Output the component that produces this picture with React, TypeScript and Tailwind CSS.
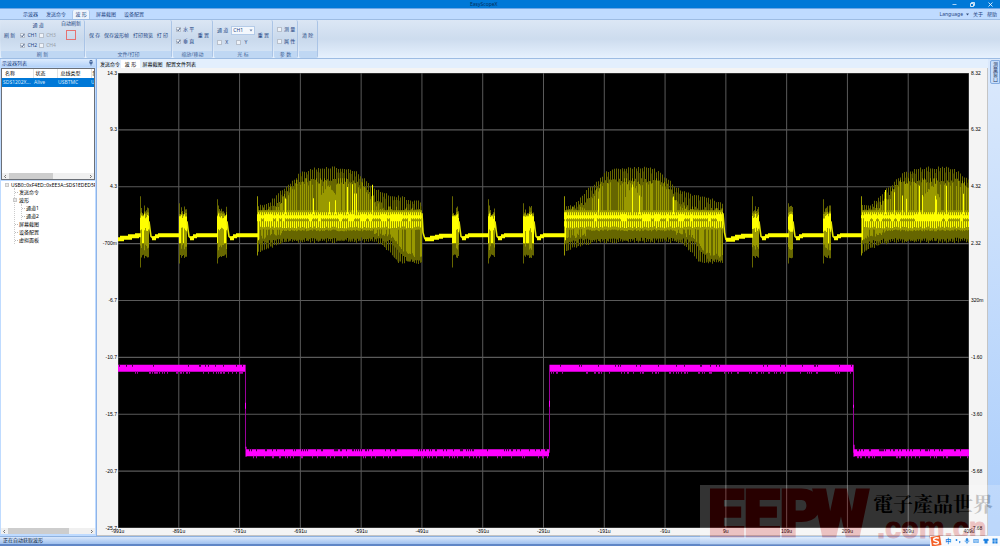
import type { ReactNode } from "react";

const CJK = "font-['Noto_Sans','Noto_Sans_CJK_SC',sans-serif]";

/* ---------- waveform geometry ---------- */

const LEFT = 118;
const TOP = 73;
const WIDTH = 851;
const HEIGHT = 454;

const noise = (n: number) => {
  const v = Math.sin(n * 12.9898 + 4.1) * 43758.5453;
  return v - Math.floor(v);
};

const lerp = (points: number[][], x: number) => {
  for (let i = 1; i < points.length; i++) {
    const [x1, y1] = points[i];
    if (x <= x1) {
      const [x0, y0] = points[i - 1];
      return y0 + ((y1 - y0) * (x - x0)) / (x1 - x0);
    }
  }
  return points[points.length - 1][1];
};

const upper = [[0, 204], [10, 203], [16, 197], [23, 189], [33, 181], [43, 171], [53, 168], [62, 166], [88, 166], [100, 171], [108, 178], [116, 186], [128, 192], [142, 195], [165, 201]];
const innerUpper = [[0, 208], [12, 206], [22, 200], [30, 190], [38, 180], [44, 178], [98, 178], [108, 184], [118, 198], [130, 206], [165, 208]];
const lower = [[0, 254], [8, 250], [20, 246], [32, 243], [118, 243], [126, 247], [134, 256], [140, 263], [165, 264]];
const innerLower = [[0, 242], [20, 238], [118, 237], [134, 240], [142, 250], [150, 258], [165, 260]];

const layers = { dark: "", dim: "", mid: "", bright: "" };
type Layer = keyof typeof layers;
const bar = (layer: Layer, x: number, y0: number, y1: number) => {
  layers[layer] += `M${x} ${y0.toFixed(1)}V${y1.toFixed(1)}`;
};

const longBursts = [[257, 422], [564, 723], [861, 1024]];
longBursts.forEach(([start, end]) => {
  for (let x = start; x < Math.min(end, 969); x++) {
    const t = ((x - start) * 165) / (end - start);
    const px = x + 0.5;
    const top = lerp(upper, t);
    const bottom = lerp(lower, t);
    const innerTop = lerp(innerUpper, t);
    const innerBottom = lerp(innerLower, t);
    const r = noise(x);
    const even = x % 2 === 0;
    const centre = t > 24 && t < 116;

    if (even) bar("dim", px, top + r * 3, bottom - r * 3);
    else if (r > 0.6) bar("dark", px, top + 2 + r * 5, bottom - 2);

    bar(r > 0.8 ? "mid" : "dim", px, innerTop + (even ? 0 : r * 6), 212);
    if (even && r > 0.25) bar("mid", px, innerTop + r * 10, 212);
    if (centre && noise(x + 77) > 0.9) bar("bright", px, 184 + noise(x + 9) * 18, 214);
    if (t > 62 && t < 80) bar("mid", px, 184 + Math.abs(t - 71) * 1.4 + r * 3, 214);

    bar("dim", px, 226, innerBottom + r * 3);
    if (!centre && r > 0.3) bar("mid", px, 226, innerBottom - r * 6);
    bar("mid", px, 210, 229 + r * 2);
    bar("bright", px, even ? 212 : 215, even ? 219 : 218);
    if (even) bar("bright", px, 221, 226 + r * 2);
    if (noise(Math.floor(x / 3) + 31) > 0.62) bar("bright", px, 214, 221);
  }
  bar("mid", start + 0.5, 196, 255);
  bar("bright", start + 1.5, 212, 240);
});

const shortBursts = [[140, 149], [179, 187], [217, 227], [452, 459], [488, 495], [523, 534], [752, 759], [788, 793], [823, 831]];
shortBursts.forEach(([start, end], i) => {
  bar("dim", start + 0.5, i % 3 === 0 ? 196 : 199 + (i % 2) * 4, i % 3 === 0 ? 267 : 263);
  for (let x = start; x < end; x++) {
    const r = noise(x * 3);
    const px = x + 0.5;
    bar("dim", px, 205 + r * 10, 258 - r * 4);
    bar("mid", px, 211 + r * 4, 250 - r * 9);
    bar("bright", px, 213 + r * 8, 227 + noise(x + 5) * 5);
    if (r > 0.7) bar("bright", px, 216, 243);
  }
});

const recovery = shortBursts
  .map(([, end]) => `M${end} 221L${end + 1} 229L${end + 2} 236L${end + 4} 238L${end + 6} 236`)
  .join("");
const settle = shortBursts
  .map(([, end], i) => {
    const next = i % 3 === 2 ? longBursts[(i - 2) / 3][0] : shortBursts[i + 1][0];
    return `M${end + 3} 238H${end + 7}M${end + 6} 236H${end + 10}M${end + 9} 235H${next + 1}`;
  })
  .join("");
const baseline = "M118 239H122V237.500H130V236H137V235H141M425 239H432V237.500H437V236.500H441V235.500H453M726 239.500H733V238H737V236.500H743V235.500H753";
const falls = "M422 213L423 232L425 239M723 213L724.500 232L726 239.500";

const channel2 = [[118, 245, 367.5], [246, 549, 452], [550, 853, 367.5], [854, 969, 452]];
let ch2Ticks = "";
let ch2Gaps = "";
channel2.forEach(([from, to, y]) => {
  for (let x = from; x < to; x++) {
    if (noise(x * 5) > 0.8) ch2Ticks += `M${x + 0.5} ${y + 3}V${y + 5.5}`;
    if (noise(x * 7) > (y > 400 ? 0.75 : 0.9)) ch2Gaps += `M${x + 0.5} ${y - 4}V${y - 1.5}`;
  }
});

const range = (n: number) => Array.from({ length: n }, (_, i) => i);

function Waveform() {
  return (
    <svg className="h-full w-full bg-black" viewBox={`${LEFT} ${TOP} ${WIDTH} ${HEIGHT}`} preserveAspectRatio="none" role="img" aria-label="Waveform">
      <g stroke="#5a5a5a" strokeWidth="1">
        {range(15).map((i) => {
          const x = LEFT + (i * WIDTH) / 14;
          return <path key={i} d={`M${x} ${TOP}V${TOP + HEIGHT}`} />;
        })}
        {range(9).map((i) => {
          const y = TOP + (i * HEIGHT) / 8;
          return <path key={i} d={`M${LEFT} ${y}H${LEFT + WIDTH}`} />;
        })}
      </g>
      <g fill="none" strokeWidth="1">
        <path d={layers.dark} stroke="#333300" />
        <path d={layers.dim} stroke="#666600" />
        <path d={layers.mid} stroke="#999900" />
        <path d={layers.bright} stroke="#ffff00" />
        <path d={recovery} stroke="#e6e600" strokeWidth="1.600" />
        <path d={falls} stroke="#e6e600" strokeWidth="1.600" />
        <path d={settle} stroke="#ffff00" strokeWidth="4" />
        <path d={baseline} stroke="#ffff00" strokeWidth="4" />
      </g>
      <g fill="none" stroke="#ff00ff">
        <path d="M245.500 364V448M549.500 364V452M853.500 364V452" stroke="#990099" strokeWidth="1" />
        <path d="M245.500 402V408M246 446V456M549.500 400V406M853.500 404V407M854 444V456" strokeWidth="1" />
        {channel2.map(([from, to, y]) => (
          <path key={from} d={`M${from} ${y}H${to}`} strokeWidth="7" />
        ))}
        <path d={ch2Ticks} stroke="#b300b3" strokeWidth="1" />
        <path d={ch2Gaps} stroke="#400040" strokeWidth="1" />
      </g>
    </svg>
  );
}

/* ---------- ribbon ---------- */

function Check({ label, checked, muted }: { label: string; checked?: boolean; muted?: boolean }) {
  return (
    <label className={`flex items-center gap-0.5 whitespace-pre ${muted ? "text-[#9a9fa8]" : ""}`}>
      <span className="relative block size-[5px]">
        <input type="checkbox" defaultChecked={checked} className="peer block size-[5px] appearance-none border border-[#b8c0cc] bg-[#eef2f8]" />
        <svg viewBox="0 0 5 5" className="pointer-events-none absolute inset-0 hidden size-[5px] peer-checked:block">
          <path d="M1 2.500L2.200 3.800L4.200 1" fill="none" stroke="#35507c" strokeWidth="0.900" />
        </svg>
      </span>
      {label}
    </label>
  );
}

function Group({ title, width, children }: { title: string; width: string; children: ReactNode }) {
  return (
    <section className={`flex flex-col overflow-hidden rounded-[2px] border-r border-[#aac4e6] bg-linear-to-b from-[#dbe6f4] via-[#c9d9ec] to-[#d9e8f9] ${width}`}>
      <div className="flex flex-1 items-center justify-between px-[3px]">{children}</div>
      <h2 className="h-[7px] bg-[#bfd7f3] text-center leading-[7px] text-[#3f6497]">{title}</h2>
    </section>
  );
}

function Cmd({ children }: { children: ReactNode }) {
  return <button className="whitespace-pre">{children}</button>;
}

function Ribbon() {
  return (
    <div className="flex h-[40px] gap-px border-y border-[#9dbce3] bg-linear-to-b from-[#dce7f5] via-[#cddcee] to-[#e6f1fe] px-px text-[5px] leading-[7px] text-[#1f4684]">
      <Group title="刷 新" width="w-[84px]">
        <Cmd>刷 新</Cmd>
        <div className="grid grid-cols-2 gap-x-0.5 gap-y-[3px]">
          <span className="col-span-2 text-center">通 道</span>
          <Check label="CH1" checked />
          <Check label="CH3" muted />
          <Check label="CH2" checked />
          <Check label="CH4" muted />
        </div>
        <div className="flex flex-col items-center gap-[3px] self-start">
          <span>自动刷新</span>
          <button aria-label="自动刷新" className="size-[10px] border border-[#e57373]" />
        </div>
      </Group>
      <Group title="文件/打印" width="w-[86px]">
        <Cmd>保 存</Cmd>
        <Cmd>保存波形帧</Cmd>
        <Cmd>打印预览</Cmd>
        <Cmd>打 印</Cmd>
      </Group>
      <Group title="缩放/移动" width="w-[40px]">
        <div className="flex flex-col gap-[5px]">
          <Check label="水 平" checked />
          <Check label="垂 直" checked />
        </div>
        <Cmd>重 置</Cmd>
      </Group>
      <Group title="光 标" width="w-[59px]">
        <div className="flex flex-col gap-1">
          <div className="flex items-center gap-[3px]">
            <label htmlFor="cursor-channel">通 道</label>
            <span className="relative block">
              <select id="cursor-channel" className="block h-[9px] w-[24px] appearance-none border border-[#b4cbe8] bg-[#f4f8fd] pl-px text-[5px] leading-[7px]">
                <option>CH1</option>
              </select>
              <svg viewBox="0 0 4 3" className="pointer-events-none absolute top-[3px] right-[2px] h-[3px] w-1">
                <path d="M0.500 0.500H3.500L2 2.500Z" fill="#6c84ab" />
              </svg>
            </span>
          </div>
          <div className="flex gap-2">
            <Check label=" X" />
            <Check label=" Y" />
          </div>
        </div>
        <Cmd>重 置</Cmd>
      </Group>
      <Group title="参 数" width="w-[24px]">
        <div className="flex flex-col gap-[5px]">
          <Check label="测 量" />
          <Check label="属 性" />
        </div>
      </Group>
      <Group title="" width="w-[19px]">
        <Cmd>清 除</Cmd>
      </Group>
    </div>
  );
}

function Header() {
  return (
    <header>
      <div className="flex h-[8px] items-center bg-[#0078d7] text-[5px] leading-[8px]">
        <div className="w-[470px] max-w-[47%]" />
        <h1 className="text-[#04305c]">EasyScopeX</h1>
        <div className="flex flex-1 items-center justify-end gap-[13px] pr-[7px]">
          <button aria-label="Minimize" className="block">
            <svg viewBox="0 0 5 5" className="size-[5px]"><path d="M0.500 2.500H4.500" stroke="#d5e8fa" strokeWidth="0.800" /></svg>
          </button>
          <button aria-label="Restore" className="block">
            <svg viewBox="0 0 5 5" className="size-[5px]" fill="none" stroke="#fff" strokeWidth="0.800"><path d="M0.500 1.500H3.500V4.500H0.500ZM1.500 1.500V0.500H4.500V3.500H3.500" /></svg>
          </button>
          <button aria-label="Close" className="block">
            <svg viewBox="0 0 5 5" className="size-[5px]"><path d="M0.500 0.500L4.500 4.500M4.500 0.500L0.500 4.500" stroke="#fff" strokeWidth="0.800" /></svg>
          </button>
        </div>
      </div>
      <nav className="flex h-[11px] items-end justify-between border-t border-[#6fa6e6] bg-[#bfdbff] text-[5px] leading-[9px] text-[#1f4684]">
        <div className="flex items-end pl-[19px]">
          <button className="px-1">示波器</button>
          <button className="px-1">发送命令</button>
          <button className="mx-0.5 w-[18px] whitespace-pre rounded-t-[2px] border-x border-[#a9c8ee] bg-[#edf4fd]">波 形</button>
          <button className="px-1">屏幕截图</button>
          <button className="px-1">设备配置</button>
        </div>
        <div className="flex items-center gap-1 pr-[3px]">
          <button className="flex items-center gap-[3px]">
            Language
            <svg viewBox="0 0 3 3" className="size-[3px]"><path d="M0 0.500H3L1.500 2.500Z" fill="#35507c" /></svg>
          </button>
          <a href="#about">关于</a>
          <a href="#help">帮助</a>
        </div>
      </nav>
      <Ribbon />
    </header>
  );
}

/* ---------- side panel ---------- */

function Scroll({ thumb }: { thumb: string }) {
  return (
    <div className="flex h-[6px] items-center gap-px bg-[#f0f0f0] px-px">
      <svg viewBox="0 0 5 5" className="size-[5px]"><path d="M3 1L1.500 2.500L3 4" fill="none" stroke="#555" strokeWidth="0.800" /></svg>
      <div className="h-full flex-1"><div className={`h-full bg-[#cdcdcd] ${thumb}`} /></div>
      <svg viewBox="0 0 5 5" className="size-[5px]"><path d="M2 1L3.500 2.500L2 4" fill="none" stroke="#555" strokeWidth="0.800" /></svg>
    </div>
  );
}

function Expander({ label }: { label: string }) {
  return (
    <button aria-label={label} className="block size-1">
      <svg viewBox="0 0 4 4" className="size-1"><path d="M0.400 0.400H3.600V3.600H0.400ZM1.200 2H2.800" fill="#fff" stroke="#9a9a9a" strokeWidth="0.600" /></svg>
    </button>
  );
}

function Leaf({ children }: { children: ReactNode }) {
  return (
    <li className="flex items-center gap-px">
      <span className="w-[3px] border-t border-dotted border-[#bbb]" />
      {children}
    </li>
  );
}

function SidePanel() {
  return (
    <aside className="flex w-[97px] shrink-0 flex-col gap-px border-r border-[#8fb4e8] bg-[#bfdbff] pr-px pb-0.5 pl-px text-[5px]">
      <div className="flex h-[8px] items-center justify-between bg-linear-to-b from-[#dcebfe] to-[#b4d2f8] px-px leading-[8px] text-[#1f4684]">
        <h2>示波器列表</h2>
        <svg viewBox="0 0 4 6" className="mr-px h-[6px] w-1"><path d="M1 0.500H3V3H1ZM0.300 3H3.700M2 3V5.500" fill="none" stroke="#1f4684" strokeWidth="0.700" /></svg>
      </div>
      <div className="flex h-[112px] flex-col justify-between border border-[#6b6f76] bg-white">
        <div className="overflow-hidden">
          <table className="w-[108px] table-fixed text-left leading-[9px]">
            <thead>
              <tr className="whitespace-nowrap text-black">
                <th className="w-[31px] border-r border-[#e2e2e2] pl-[3px] font-normal">名称</th>
                <th className="w-[24px] border-r border-[#e2e2e2] pl-0.5 font-normal">状态</th>
                <th className="w-[34px] border-r border-[#e2e2e2] pl-[3px] font-normal">总线类型</th>
                <th className="pl-px font-normal">制造商</th>
              </tr>
            </thead>
            <tbody>
              <tr className="whitespace-nowrap bg-[#0078d7] text-[#d6e9fb]">
                <td className="pl-px">SDS1202X...</td>
                <td className="pl-px">Alive</td>
                <td className="pl-px">USBTMC</td>
                <td>USB0</td>
              </tr>
            </tbody>
          </table>
        </div>
        <Scroll thumb="w-[56%]" />
      </div>
      <div className="flex flex-1 flex-col justify-between bg-white">
        <div className="overflow-hidden pl-1 leading-[8px] whitespace-nowrap text-black">
          <div className="flex h-[7px] items-center gap-0.5">
            <Expander label="USB0" />
            USB0::0xF4ED::0xEE3A::SDS1EDED5R1
          </div>
          <ul className="ml-[9px] border-l border-dotted border-[#ccc]">
            <Leaf>发送命令</Leaf>
            <li>
              <div className="-ml-[2px] flex items-center gap-0.5"><Expander label="波形" />波形</div>
              <ul className="ml-[6px] border-l border-dotted border-[#ccc]">
                <Leaf>通道1</Leaf>
                <Leaf>通道2</Leaf>
              </ul>
            </li>
            <Leaf>屏幕截图</Leaf>
            <Leaf>设备配置</Leaf>
            <Leaf>虚拟面板</Leaf>
          </ul>
        </div>
        <Scroll thumb="w-[76%]" />
      </div>
    </aside>
  );
}

/* ---------- plot ---------- */

const leftScale = ["14.3", "9.3", "4.3", "-700m", "-6.7", "-10.7", "-15.7", "-20.7", "-25.7"];
const rightScale = ["8.32", "6.32", "4.32", "2.32", "320m", "-1.60", "-3.60", "-5.68", "-7.68"];
const timeScale = ["-991u", "-891u", "-791u", "-691u", "-591u", "-491u", "-391u", "-291u", "-191u", "-91u", "9u", "109u", "209u", "309u", "409u"];

function YScale({ values, align }: { values: string[]; align: string }) {
  return (
    <div className={`flex flex-col justify-between ${align}`}>
      {values.map((v) => (
        <span key={v} className="flex h-0 items-center">{v}</span>
      ))}
    </div>
  );
}

function Plot() {
  return (
    <main className="flex min-w-0 flex-1 flex-col bg-[#e3effd]">
      <nav className="flex h-[9px] items-end gap-px px-[3px] text-[5px] leading-[8px] text-black">
        <button className="w-[20px]">发送命令</button>
        <button className="w-[19px] whitespace-pre bg-white">波 形</button>
        <button className="w-[23px]">屏幕截图</button>
        <button className="w-[32px]">配置文件列表</button>
      </nav>
      <div className="grid flex-1 grid-cols-[21px_1fr_18px] grid-rows-[1fr_7px] border-r border-b border-[#c4c4c4] bg-[#f4f4f4] pt-[5px] font-['Liberation_Sans',sans-serif] text-[5px] leading-[5px] text-black">
        <YScale values={leftScale} align="items-end pr-px" />
        <div className="relative">
          <div className="absolute inset-0"><Waveform /></div>
        </div>
        <YScale values={rightScale} align="items-start pl-0.5" />
        <div className="col-start-2 flex items-center justify-between">
          {timeScale.map((v) => (
            <span key={v} className="flex w-0 justify-center">{v}</span>
          ))}
        </div>
      </div>
    </main>
  );
}

/* ---------- overlays ---------- */

function Watermark() {
  return (
    <div className="pointer-events-none absolute right-0 bottom-px flex h-[60px] w-[300px] items-center gap-1 bg-white pl-[8px] opacity-20">
      <div className="flex font-['Roboto',sans-serif] text-[64px] leading-[60px] font-black text-[#c80000] [-webkit-text-stroke:3px_#c80000]">
        <span>EEP</span>
        <span className="-ml-2">W</span>
      </div>
      <div className="flex flex-col whitespace-nowrap">
        <span className="font-['Noto_Serif_CJK_TC','Noto_Sans_CJK_TC',serif] text-[20px] leading-[26px] font-bold text-black">電子產品世界</span>
        <span className="pl-1 font-['Liberation_Sans',sans-serif] text-[29px] leading-[22px] font-bold text-[#c80000] [-webkit-text-stroke:1px_#c80000]">.com.cn</span>
      </div>
    </div>
  );
}

function InputTray() {
  return (
    <div className="absolute right-0 bottom-0 flex h-[10px] w-[70px] items-center justify-between bg-[#f7fafe] pr-0.5 text-[6px] leading-[10px] font-bold text-[#1a7fe0]">
      <svg viewBox="0 0 12 12" className="size-[12px]">
        <path d="M0.500 2L10 0.500L11.500 10L2 11.500Z" fill="#f4622a" />
        <path d="M8.800 3.300C7 2.500 3.500 2.800 3.600 4.600C3.700 6.400 8.400 5.600 8.400 7.400C8.400 9.200 5 9.200 3.300 8.400" fill="none" stroke="#fff" strokeWidth="1.500" />
      </svg>
      <span>中</span>
      <svg viewBox="0 0 6 6" className="size-[6px]" fill="#1a7fe0"><circle cx="1.500" cy="2" r="0.900" /><path d="M4 3.200H5.400V4.500L4.200 5.600L4.500 4.500H4Z" /></svg>
      <svg viewBox="0 0 6 6" className="size-[6px]" fill="none" stroke="#1a7fe0" strokeWidth="0.700"><rect x="2.200" y="0.400" width="1.600" height="3" rx="0.800" fill="#1a7fe0" /><path d="M1.100 2.600C1.100 5.200 4.900 5.200 4.900 2.600M3 4.500V5.800" /></svg>
      <svg viewBox="0 0 6 6" className="size-[6px]"><rect x="0.300" y="1" width="5.400" height="4" rx="0.500" fill="#5ea6ec" /><path d="M1 2.300H5M1 3.200H5M1.500 4.200H4.500" stroke="#fff" strokeWidth="0.400" /></svg>
      <svg viewBox="0 0 6 6" className="size-[6px]" fill="#1a7fe0"><path d="M2 0.600C2.500 1.300 3.500 1.300 4 0.600L5.900 1.800L5.200 3L4.500 2.700V5.600H1.500V2.700L0.800 3L0.100 1.800Z" /></svg>
      <svg viewBox="0 0 6 6" className="size-[6px]" fill="#1a7fe0"><path d="M0.500 0.500H2.700V2.700H0.500ZM3.300 0.500H5.500V2.700H3.300ZM0.500 3.300H2.700V5.500H0.500ZM3.300 3.300H5.500V5.500H3.300Z" /></svg>
    </div>
  );
}

export default function App() {
  return (
    <div className={`relative flex h-screen flex-col overflow-hidden bg-[#bfdbff] ${CJK}`}>
      <Header />
      <div className="flex min-h-0 flex-1">
        <SidePanel />
        <Plot />
        <aside className="w-[12px] shrink-0 bg-linear-to-b from-[#dbe9fc] to-[#aacdfb] pt-px pl-0.5">
          <button className="flex h-[24px] w-full items-center justify-center rounded-l-[2px] border border-[#86ade0] bg-[#c7defb] text-[5px] leading-[6px] text-[#1f3460] [writing-mode:vertical-rl]">测量窗口</button>
        </aside>
      </div>
      <footer className="flex h-[10px] items-center border-t border-b-2 border-t-[#8fb2e0] border-b-[#5f86c6] bg-linear-to-b from-[#d8e7fb] to-[#9fc0ee] pl-[3px] text-[5px] leading-[7px] text-[#0c1c38]">正在自动获取波形</footer>
      <Watermark />
      <InputTray />
    </div>
  );
}
